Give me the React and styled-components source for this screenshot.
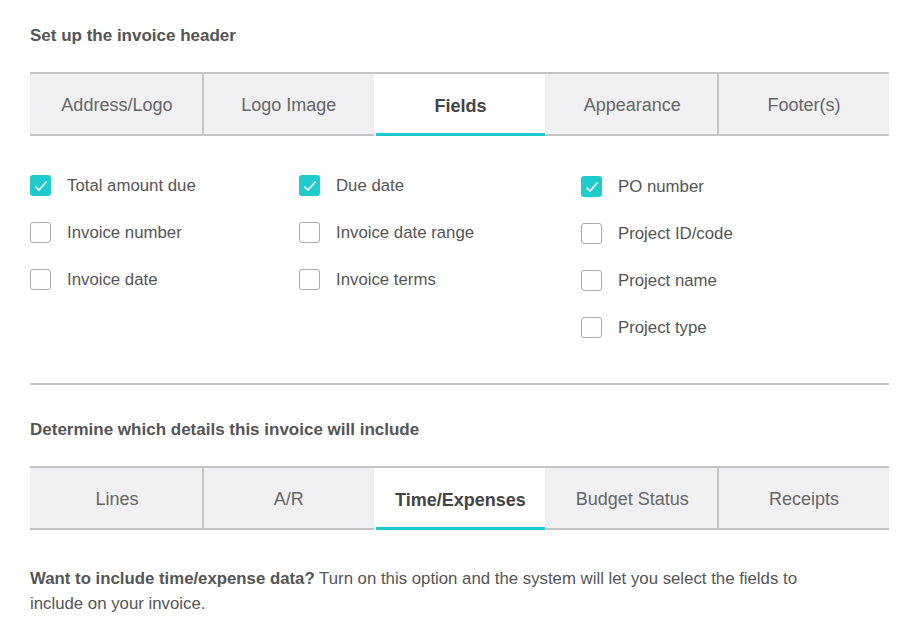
import React from 'react'
import styled, { createGlobalStyle } from 'styled-components'

const Global = createGlobalStyle`
  body { margin: 0; background: #fff; font-family: "Liberation Sans", Arial, sans-serif; color: #555; }
`

const Page = styled.div`
  padding: 25px 29px 0 30px;
`

const Heading = styled.h2`
  margin: 0 0 25px;
  font-size: 17px;
  font-weight: bold;
  color: #555;
  line-height: 22px;
`

const TabBar = styled.div`
  display: flex;
  border-top: 2px solid #c4c4c4;
  border-bottom: 2px solid #c4c4c4;
  background: #f0f0f2;
  height: 60px;
`

const Tab = styled.div`
  flex: 1;
  display: flex;
  align-items: center;
  justify-content: center;
  padding-top: 2px;
  font-size: 18px;
  color: ${p => (p.$active ? '#444' : '#666')};
  font-weight: ${p => (p.$active ? 'bold' : 'normal')};
  background: ${p => (p.$active ? '#fff' : 'transparent')};
  border-left: ${p => (p.$sep ? '2px solid #c4c4c4' : '2px solid transparent')};
  box-shadow: ${p => (p.$active ? 'inset 0 -3px 0 #1ec9c9' : 'none')};
  margin-bottom: ${p => (p.$active ? '-2px' : '0')};
`

const Fields = styled.div`
  display: grid;
  grid-template-columns: 269px 282px 1fr;
  padding: 38px 0 44px;
  border-bottom: 2px solid #c4c4c4;
  margin-bottom: 34px;
`

const Column = styled.div`
  display: flex;
  flex-direction: column;
  gap: 24px;
  padding-top: ${p => p.$offset || 0}px;
`

const Row = styled.label`
  display: flex;
  align-items: center;
  gap: 16px;
  font-size: 16.8px;
  color: #555;
  height: 23px;
`

const Box = styled.span`
  width: 21px;
  height: 21px;
  border-radius: 3px;
  box-sizing: border-box;
  display: flex;
  align-items: center;
  justify-content: center;
  background: ${p => (p.$on ? '#1ecccc' : '#fff')};
  border: ${p => (p.$on ? 'none' : '1.5px solid #aaa')};
`

const Text = styled.p`
  margin: 36px 0 0;
  font-size: 16.8px;
  line-height: 25px;
  color: #555;
  b { color: #555; }
`

const Check = ({ on, label }) => (
  <Row>
    <Box $on={on}>
      {on && (
        <svg width="14" height="12" viewBox="0 0 14 12">
          <path d="M1.5 6.5 L5 10 L12.5 1.5" stroke="#fff" strokeWidth="1.6" fill="none" />
        </svg>
      )}
    </Box>
    {label}
  </Row>
)

const Tabs = ({ items, active }) => (
  <TabBar>
    {items.map((t, i) => (
      <Tab key={t} $active={i === active} $sep={i > 0 && i !== active && i - 1 !== active}>
        {t}
      </Tab>
    ))}
  </TabBar>
)

export default function App() {
  return (
    <Page>
      <Global />
      <Heading>Set up the invoice header</Heading>
      <Tabs items={['Address/Logo', 'Logo Image', 'Fields', 'Appearance', 'Footer(s)']} active={2} />
      <Fields>
        <Column>
          <Check on label="Total amount due" />
          <Check label="Invoice number" />
          <Check label="Invoice date" />
        </Column>
        <Column>
          <Check on label="Due date" />
          <Check label="Invoice date range" />
          <Check label="Invoice terms" />
        </Column>
        <Column $offset={1}>
          <Check on label="PO number" />
          <Check label="Project ID/code" />
          <Check label="Project name" />
          <Check label="Project type" />
        </Column>
      </Fields>
      <Heading>Determine which details this invoice will include</Heading>
      <Tabs items={['Lines', 'A/R', 'Time/Expenses', 'Budget Status', 'Receipts']} active={2} />
      <Text>
        <b>Want to include time/expense data?</b> Turn on this option and the system will let you select the fields to{' '}
        <br />
        include on your invoice.
      </Text>
    </Page>
  )
}
